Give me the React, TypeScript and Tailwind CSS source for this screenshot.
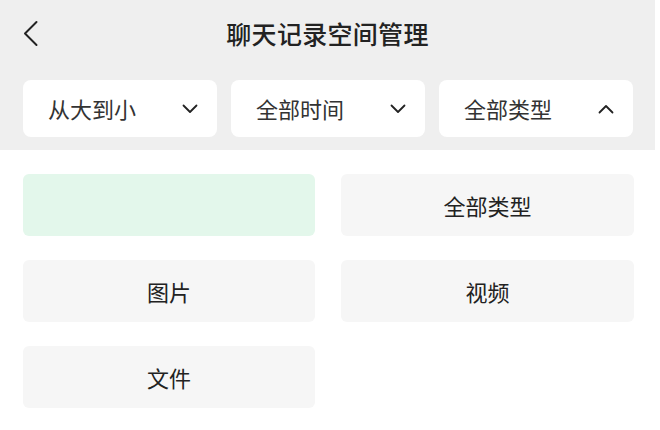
import { useState } from "react";

const sortOptions = ["从大到小", "全部时间", "全部类型"];
const typeOptions = ["", "全部类型", "图片", "视频", "文件"];

function Chevron({ up = false }: { up?: boolean }) {
  return (
    <svg width="16" height="10" viewBox="0 0 16 10" fill="none" stroke="#222" strokeWidth="1.8" strokeLinecap="round" strokeLinejoin="round">
      {up ? <polyline points="1.5 8.5 8 2 14.5 8.5" /> : <polyline points="1.5 1.5 8 8 14.5 1.5" />}
    </svg>
  );
}

export default function App() {
  const [active] = useState(0);

  return (
    <div className="w-[660px] h-[430px] bg-white overflow-hidden" style={{ fontFamily: '"Noto Sans CJK SC", "Noto Sans", sans-serif' }}>
      {/* Header */}
      <div className="w-[655px] h-[150px] bg-[#efefef] flex flex-col">
        <div className="h-[72px] grid grid-cols-[1fr_auto_1fr] items-center">
          <div className="pl-[22px] pb-[4px] flex items-center">
            <svg width="18" height="28" viewBox="0 0 18 28" fill="none" stroke="#222" strokeWidth="2" strokeLinecap="round" strokeLinejoin="round">
              <polyline points="14.5 2 3 13.5 14.5 25" />
            </svg>
          </div>
          <h1 className="mb-[6px] text-[25px] leading-none font-medium text-[#222] tracking-[0.3px]">聊天记录空间管理</h1>
          <div />
        </div>

        {/* Filters */}
        <div className="mt-[8px] pl-[23px] flex gap-[14px]">
          {sortOptions.map((label, i) => (
            <div key={label} className="w-[194px] h-[57px] bg-white rounded-[8px] flex items-center justify-between pl-[25px] pr-[19px]">
              <span className="pb-[2px] text-[22px] leading-none text-[#333]">{label}</span>
              <Chevron up={i === 2} />
            </div>
          ))}
        </div>
      </div>

      {/* Type options */}
      <div className="pt-[24px] pl-[23px] grid grid-cols-[292px_293px] gap-x-[26px] gap-y-[24px]">
        {typeOptions.map((label, i) => (
          <div
            key={i}
            className={`h-[62px] rounded-[6px] flex items-center justify-center text-[22px] leading-none text-[#222] ${
              i === active ? "bg-[#e3f7eb]" : "bg-[#f6f6f6]"
            }`}
          >
            {label}
          </div>
        ))}
      </div>
    </div>
  );
}
